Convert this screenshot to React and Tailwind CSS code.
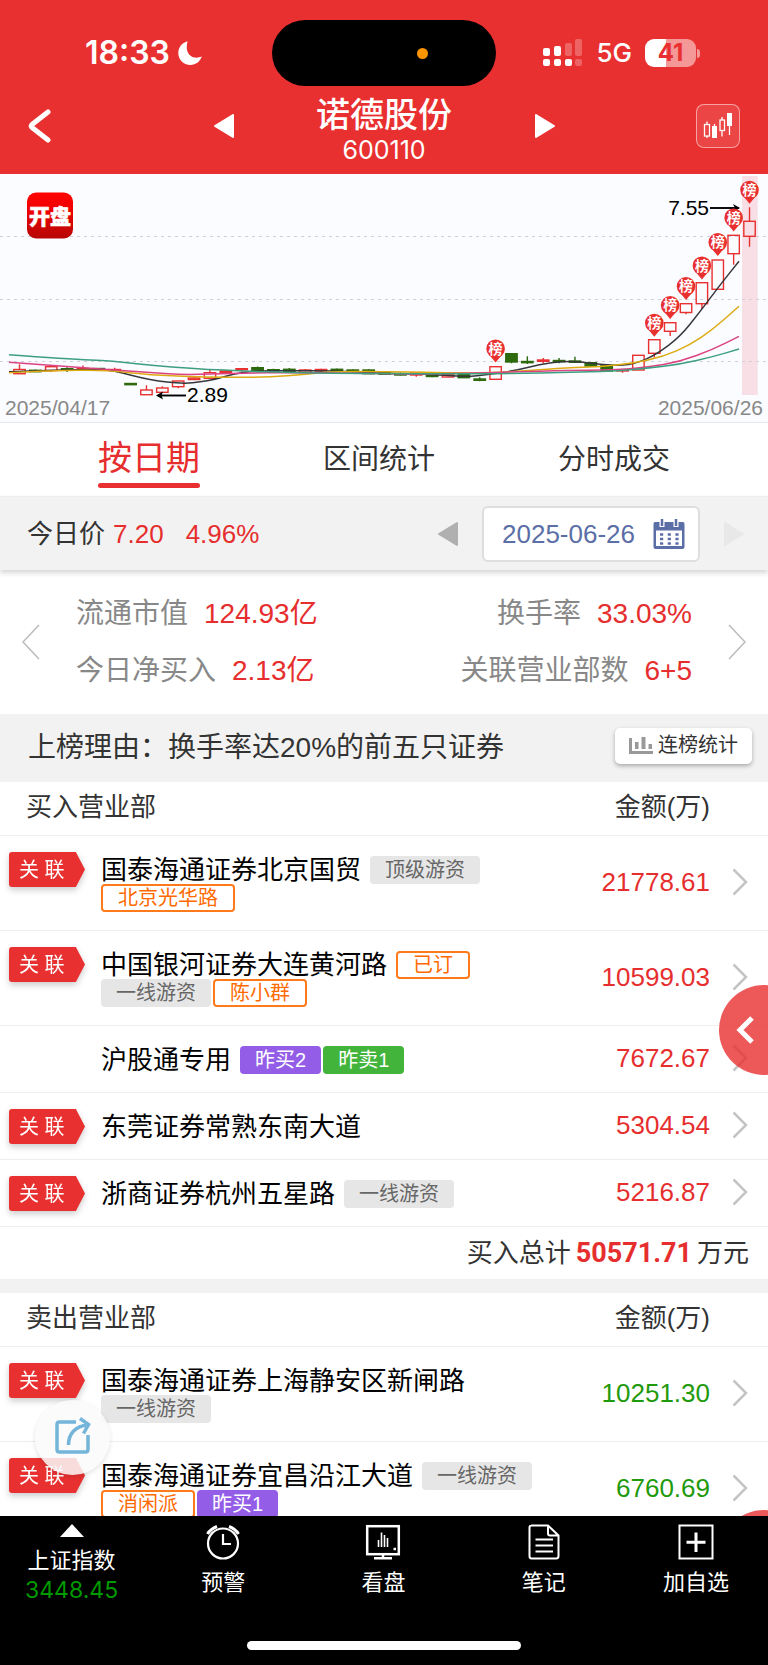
const RED = '#e93030'
const GREEN = '#2d6a0e'

// [open/close top, open/close bottom, wick top, wick bottom, rising]
const CANDLES = [
  [195.5, 199.7, 190.3, 199.7, 1],
  [196.3, 197.7, 195.5, 198, 0],
  [192.7, 196.5, 192.7, 198, 1],
  [194.7, 196, 193.3, 198, 0],
  [194.5, 195.7, 191.5, 196, 1],
  [194.5, 195.7, 194, 196.5, 0],
  [195.5, 196.5, 193.7, 197.5, 1],
  [209.5, 210.7, 209.5, 210.7, 0],
  [216, 220.7, 211.3, 220.7, 1],
  [214, 218.3, 212.3, 218.3, 1],
  [207, 212.7, 207, 214.3, 1],
  [204, 205.5, 203.5, 206, 1],
  [198.7, 204.3, 195, 204.3, 1],
  [197, 198.3, 196, 199.5, 1],
  [194.7, 195.7, 194.7, 197.7, 1],
  [193.7, 196.3, 192.5, 197, 0],
  [195.7, 197, 194.7, 197.5, 0],
  [195.3, 198.3, 194, 199, 0],
  [196, 198.3, 195, 198.7, 1],
  [195.5, 197, 194.7, 198, 1],
  [195.3, 197, 194.5, 197.3, 0],
  [196, 197.3, 195.3, 198, 0],
  [196, 199.7, 195.3, 200, 0],
  [198.5, 200.3, 197.3, 201, 0],
  [199.7, 201, 198.5, 201.5, 0],
  [199, 201, 198.7, 202.7, 1],
  [199, 202.5, 198.7, 203.3, 0],
  [200.3, 203, 200, 203.3, 1],
  [200.3, 203.7, 200, 204, 0],
  [205, 206.3, 203.3, 207.3, 0],
  [192.7, 205.3, 192.7, 205.3, 1],
  [179.7, 188, 179.3, 189.3, 0],
  [187.5, 188.7, 182.3, 190, 0],
  [186, 187.3, 184, 189.3, 1],
  [186.5, 187.7, 184, 189.3, 0],
  [187, 188.3, 182.7, 188.5, 0],
  [188.7, 192, 188.3, 192.3, 0],
  [191.3, 197, 191, 197.3, 0],
  [196, 197, 195, 198.7, 1],
  [181.3, 196, 181.3, 196, 1],
  [165.7, 179.3, 165.7, 183.5, 1],
  [148.7, 157.3, 148.7, 162, 1],
  [129.7, 138.5, 129.7, 140.3, 1],
  [108.7, 129.7, 108.7, 135, 1],
  [86, 115.3, 86, 115.3, 1],
  [61.3, 79.7, 61.3, 90.7, 1],
  [47.3, 62.3, 33.3, 72.7, 1],
]

const candleX = (i) => 19.5 + i * 15.87

// candle index and height of each 龙虎榜 pin
const PINS = [
  [30, 174.7],
  [40, 149],
  [41, 131.3],
  [42, 112.3],
  [43, 91.7],
  [44, 68.3],
  [45, 43.7],
  [46, 16],
]

const AVERAGES = [
  {
    color: '#35373b',
    points: [[9, 197.7], [52, 196], [100, 195.3], [114, 196.7], [133, 201.7], [150, 206], [167, 208], [185, 209.7], [200, 208], [217, 205], [233, 200], [253, 197], [290, 196.7], [333, 196.7], [380, 199.3], [413, 199.7], [447, 201.3], [467, 202.7], [487, 200.7], [513, 197], [540, 190.3], [563, 187.3], [580, 187.7], [600, 190.3], [620, 191.7], [637, 189.3], [657, 180], [680, 162.7], [700, 137.7], [720, 111], [739, 87.3]],
  },
  {
    color: '#dcab12',
    points: [[9, 198.7], [52, 196.7], [107, 196], [140, 200], [183, 202.7], [227, 203.3], [267, 203.3], [307, 200], [333, 197.3], [400, 197.7], [447, 199], [493, 199], [527, 196.7], [567, 193.7], [600, 192.7], [633, 189.3], [663, 182.7], [690, 171], [713, 155.3], [739, 132.3]],
  },
  {
    color: '#dc4383',
    points: [[9, 188.3], [67, 192.3], [114, 196], [150, 198.7], [187, 201], [233, 199], [300, 198.7], [367, 199.3], [413, 200.3], [463, 199.3], [513, 198], [567, 196.3], [613, 196], [647, 193.3], [680, 187.7], [713, 175.3], [739, 162.3]],
  },
  {
    color: '#3d9f80',
    points: [[9, 180.7], [67, 185], [114, 187], [150, 191.3], [200, 195], [233, 196.7], [300, 199], [367, 199.7], [447, 200], [513, 199.7], [567, 198.3], [613, 197.3], [647, 194.3], [680, 190.3], [713, 182.7], [739, 175]],
  },
]

function smooth(points) {
  const last = points[points.length - 1]
  let d = `M${points[0]}`
  for (let i = 1; i < points.length - 1; i++) {
    const [x, y] = points[i]
    const [nx, ny] = points[i + 1]
    d += `Q${x} ${y} ${(x + nx) / 2} ${(y + ny) / 2}`
  }
  return `${d}L${last}`
}

const TABS = ['按日期', '区间统计', '分时成交']

const BUYERS = [
  { name: '国泰海通证券北京国贸', linked: true, amount: '21778.61', tags: [['gray', '顶级游资'], ['orange', '北京光华路']] },
  { name: '中国银河证券大连黄河路', linked: true, amount: '10599.03', tags: [['orange', '已订'], ['gray', '一线游资'], ['orange', '陈小群']] },
  { name: '沪股通专用', linked: false, amount: '7672.67', tags: [['purple', '昨买2'], ['green', '昨卖1']] },
  { name: '东莞证券常熟东南大道', linked: true, amount: '5304.54', tags: [] },
  { name: '浙商证券杭州五星路', linked: true, amount: '5216.87', tags: [['gray', '一线游资']] },
]

const SELLERS = [
  { name: '国泰海通证券上海静安区新闸路', linked: true, amount: '10251.30', tags: [['gray', '一线游资']] },
  { name: '国泰海通证券宜昌沿江大道', linked: true, amount: '6760.69', tags: [['gray', '一线游资'], ['orange', '消闲派'], ['purple', '昨买1']] },
]

const TAG_STYLES = {
  gray: 'border-[#e6e6e6] bg-[#e6e6e6] px-[13px] text-[#666]',
  orange: 'border-[#ff7a1a] bg-white px-[15px] text-[#ff6a00]',
  purple: 'border-[#935de8] bg-[#935de8] px-[13px] text-white',
  green: 'border-[#42b43c] bg-[#42b43c] px-[13px] text-white',
}

function StatusBar() {
  return (
    <div className="grid grid-cols-[1fr_224px_1fr] items-center pt-5 font-[Inter]">
      <div className="flex items-center gap-2 pl-[85px]">
        <span className="text-[32px] leading-8 font-semibold">18:33</span>
        <svg className="h-6 w-6" viewBox="0 0 24 24" fill="currentColor">
          <path d="M9.6 0.3C8 6.500 8.600 11.500 12.200 14.500C15.500 17.200 19.800 17.300 23.800 15.600C22 20.800 17.800 24 12.500 24C5.600 24 0.300 18.800 0.300 12C0.300 6.500 4 1.700 9.600 0.300Z" />
        </svg>
      </div>
      <div className="relative h-[66px] rounded-full bg-black">
        <span className="absolute top-7 left-[145px] h-[11px] w-[11px] rounded-full bg-[#ff9500]" />
      </div>
      <div className="flex items-center justify-end pr-[68px]">
        <svg className="mr-[13px] h-7 w-10" viewBox="0 0 40 28" fill="currentColor">
          <rect x="0" y="9" width="7" height="8" rx="2" />
          <rect x="11" y="7" width="7" height="10" rx="2" />
          <rect x="22" y="4" width="7" height="13" rx="2" opacity=".25" />
          <rect x="32" y="0" width="7" height="17" rx="2" opacity=".25" />
          <rect x="0" y="20" width="7" height="7" rx="2" />
          <rect x="11" y="20" width="7" height="7" rx="2" />
          <rect x="22" y="20" width="7" height="7" rx="2" />
          <rect x="32" y="20" width="7" height="7" rx="2" opacity=".25" />
        </svg>
        <span className="mr-[13px] text-[26px] leading-7 font-medium">5G</span>
        <span className="flex h-7 w-[51px] items-center justify-center rounded-[9px] bg-linear-to-r from-white from-41% to-white/50 to-41% text-[24px] font-bold text-[#e93030]">
          41
        </span>
        <span className="ml-px h-[9px] w-[3px] rounded-r-full bg-white/50" />
      </div>
    </div>
  )
}

function Triangle({ className, left }) {
  return (
    <svg className={className} viewBox="0 0 20 24" fill="currentColor" stroke="currentColor" strokeWidth="2" strokeLinejoin="round">
      <path d={left ? 'M19 1V23L1 12Z' : 'M1 1V23L19 12Z'} />
    </svg>
  )
}

function TitleBar() {
  return (
    <div className="flex h-[88px] items-center">
      <div className="mb-2 flex flex-1 pl-7">
        <button aria-label="返回">
          <svg className="h-[34px] w-[23px]" viewBox="0 0 23 34" fill="none" stroke="currentColor" strokeWidth="5" strokeLinecap="round" strokeLinejoin="round">
            <path d="M20 3L4 15.500Q2.500 17 4 18.500L20 31" />
          </svg>
        </button>
      </div>
      <div className="flex w-[341px] items-center justify-between">
        <button className="mb-2" aria-label="上一只">
          <Triangle left className="h-6 w-5" />
        </button>
        <div className="pt-1 text-center">
          <h1 className="text-[34px] leading-9 font-medium">诺德股份</h1>
          <p className="font-[Inter] text-[25px] leading-[34px]">600110</p>
        </div>
        <button className="mb-2" aria-label="下一只">
          <Triangle className="h-6 w-5" />
        </button>
      </div>
      <div className="mb-2 flex flex-1 justify-end pr-7">
        <button className="flex h-11 w-11 items-center justify-center rounded-lg border border-white/50 bg-white/10" aria-label="K线">
          <svg className="h-[26px] w-[30px]" viewBox="0 0 30 26" fill="none" stroke="currentColor">
            <path d="M4 8.500v3M4 23v2M19 4v3M19 18v5.500M11.500 11v3M26.500 11v11" strokeWidth="1.300" />
            <rect x="1.500" y="11.500" width="5" height="11.500" strokeWidth="1.300" />
            <rect x="17" y="7" width="4.500" height="10.500" strokeWidth="1.300" />
            <rect x="9" y="13" width="5" height="12" fill="currentColor" stroke="none" />
            <rect x="24" y="0" width="5" height="13" fill="currentColor" stroke="none" />
          </svg>
        </button>
      </div>
    </div>
  )
}

function Pin({ x, y }) {
  return (
    <g transform={`translate(${x} ${y})`}>
      <circle r="9.300" fill={RED} />
      <path d="M-6 6.500L0 13.700L6 6.500Z" fill={RED} />
      <text y="5" textAnchor="middle" fontSize="14" fontWeight="700" fill="#fff">
        榜
      </text>
    </g>
  )
}

function Chart() {
  return (
    <svg className="block w-full border-b border-[#e6e8ee] bg-[#fbfcff]" viewBox="0 0 768 248">
      <defs>
        <linearGradient id="logo" x1="0" y1="0" x2="0" y2="1">
          <stop offset="0" stopColor="#ff0400" />
          <stop offset=".4" stopColor="#ee0000" />
          <stop offset="1" stopColor="#b60606" />
        </linearGradient>
      </defs>
      <rect x="742" y="2" width="15.700" height="219" fill="#f7dfe5" />
      {[62.5, 125.5, 187.5].map((y) => (
        <path key={y} d={`M0 ${y}H768`} stroke="#cfd1d6" strokeDasharray="3 4" />
      ))}
      <rect x="27" y="18.500" width="46" height="46" rx="9" fill="url(#logo)" />
      <text x="50" y="50" textAnchor="middle" fontSize="21" fontWeight="900" fill="#fff" stroke="#fff" strokeWidth=".6">
        开盘
      </text>

      {CANDLES.map(([top, bottom, high, low, up], i) => {
        const x = candleX(i)
        const color = up ? RED : GREEN
        return (
          <g key={i} stroke={color} strokeWidth="1.400">
            <path d={`M${x} ${high}V${top}M${x} ${bottom}V${low}`} />
            <rect x={x - 5.700} y={top} width="11.400" height={bottom - top} fill={up ? 'none' : color} />
          </g>
        )
      })}
      {AVERAGES.map(({ color, points }) => (
        <path key={color} d={smooth(points)} fill="none" stroke={color} strokeWidth="1.500" />
      ))}

      <g stroke="#000" strokeWidth="1.900" fill="none">
        <path d="M710 34H739" />
        <path d="M186 221.500H158" />
      </g>
      <path d="M740 34L733 30L735 34L733 38ZM156 221.500L163 217.500L161.500 221.500L163 225.500Z" />
      {PINS.map(([i, y]) => (
        <Pin key={i} x={candleX(i)} y={y} />
      ))}
      <g fontSize="21">
        <text x="709" y="41" textAnchor="end">7.55</text>
        <text x="187" y="228">2.89</text>
        <text x="5" y="241" fill="#888">2025/04/17</text>
        <text x="763" y="241" textAnchor="end" fill="#888">2025/06/26</text>
      </g>
    </svg>
  )
}

function Tabs() {
  return (
    <div className="flex h-[73px] items-center justify-between px-[98px] pt-px text-[28px]">
      {TABS.map((tab, i) =>
        i === 0 ? (
          <button key={tab} className="text-[34px] leading-[50px] text-[#e62e2e]">
            {tab}
            <span className="block h-[5px] rounded-full bg-[#e93030]" />
          </button>
        ) : (
          <button key={tab} className="text-[#333]">
            {tab}
          </button>
        ),
      )}
    </div>
  )
}

function DateBar() {
  return (
    <div className="relative flex h-[74px] items-center justify-between border-t border-[#eee] bg-[#f2f2f2] pt-px pr-6 pl-[27px] text-[26px] shadow-[0_3px_5px_rgba(0,0,0,0.16)]">
      <div className="flex items-center text-[#e62e2e]">
        <span className="mr-2 text-[#333]">今日价</span>
        <span className="mr-[22px]">7.20</span>
        <span>4.96%</span>
      </div>
      <div className="flex items-center">
        <button className="mr-6 text-[#b0b0b0]" aria-label="前一天">
          <Triangle left className="h-[26px] w-5" />
        </button>
        <button className="mr-6 flex h-14 items-center gap-[18px] rounded-md border-2 border-[#dedede] bg-white pr-[13px] pl-[18px] text-[#5b6ea6]">
          2025-06-26
          <svg className="h-[30px] w-8" viewBox="0 0 32 30" fill="currentColor">
            <path fillRule="evenodd" d="M2 3H30Q31.500 3 31.500 5V28Q31.500 30 29.500 30H2.500Q0.500 30 0.500 28V5Q0.500 3 2 3ZM3 11.500V27H29V11.500Z" />
            <path d="M9 0V8M23 0V8" stroke="#fff" strokeWidth="5" />
            <path d="M9 0V7M23 0V7" stroke="currentColor" strokeWidth="2.500" />
            <path d="M7 15.500H26M7 20H26M7 24.500H26" stroke="currentColor" strokeWidth="2.600" strokeDasharray="3.200 4.500" />
          </svg>
        </button>
        <button className="text-[#e8e8e8]" aria-label="后一天">
          <Triangle className="h-[26px] w-5" />
        </button>
      </div>
    </div>
  )
}

function Stat({ label, value }) {
  return (
    <div className="flex gap-4 leading-[57px]">
      <span className="text-[#888]">{label}</span>
      <span className="text-[#e62e2e]">{value}</span>
    </div>
  )
}

function Stats() {
  return (
    <div className="flex h-36 items-center justify-between px-[22px] text-[28px]">
      <button className="text-[#bbb]" aria-label="上一页">
        <svg className="h-9 w-[18px]" viewBox="0 0 18 36" fill="none" stroke="currentColor" strokeWidth="1.500">
          <path d="M17 1L1 18L17 35" />
        </svg>
      </button>
      <div className="flex flex-1 justify-between px-9">
        <div>
          <Stat label="流通市值" value="124.93亿" />
          <Stat label="今日净买入" value="2.13亿" />
        </div>
        <div className="flex flex-col items-end">
          <Stat label="换手率" value="33.03%" />
          <Stat label="关联营业部数" value="6+5" />
        </div>
      </div>
      <button className="text-[#bbb]" aria-label="下一页">
        <svg className="h-9 w-[18px]" viewBox="0 0 18 36" fill="none" stroke="currentColor" strokeWidth="1.500">
          <path d="M1 1L17 18L1 35" />
        </svg>
      </button>
    </div>
  )
}

function Reason() {
  return (
    <div className="flex h-[68px] items-center justify-between bg-[#f2f2f2] pr-4 pl-7 text-[#333]">
      <p className="text-[28px]">上榜理由：换手率达20%的前五只证券</p>
      <button className="mb-1 flex h-9 items-center gap-[5px] rounded-[5px] bg-white px-[14px] pb-0.5 text-[20px] shadow-[0_2px_4px_rgba(0,0,0,0.3)]">
        <svg className="h-[17px] w-6" viewBox="0 0 24 17" fill="#999">
          <path d="M0 1H3V14H24V17H0ZM6 5H9.500V12H6ZM12.500 0H16.500V12H12.500ZM19.500 7H23V12H19.500Z" />
        </svg>
        连榜统计
      </button>
    </div>
  )
}

function Linked() {
  return (
    <span className="block drop-shadow-[0_3px_3px_rgba(0,0,0,0.2)]">
      <span className="block h-[35px] w-[76px] rounded-l-[3px] bg-[#e93030] pl-[10px] text-[20px] leading-9 whitespace-pre text-white [clip-path:polygon(0_0,88%_0,100%_50%,88%_100%,0_100%)]">
        关 联
      </span>
    </span>
  )
}

function SeatTable({ title, rows, amountClass }) {
  return (
    <table className="w-full table-fixed border-separate border-spacing-0 text-[26px]">
      <colgroup>
        <col className="w-[101px]" />
        <col />
        <col className="w-[140px]" />
        <col className="w-[58px]" />
      </colgroup>
      <thead className="text-[#333]">
        <tr className="h-[54px]">
          <th colSpan={2} className="border-b border-[#eee] pb-1 pl-[26px] text-left leading-7 font-normal">
            {title}
          </th>
          <th className="border-b border-[#eee] pb-1 text-right leading-7 font-normal">金额(万)</th>
          <th className="border-b border-[#eee]" />
        </tr>
      </thead>
      <tbody>
        {rows.map((row) => (
          <tr key={row.name}>
            <td className="border-b border-[#eee] pt-4 pl-[9px] align-top">{row.linked && <Linked />}</td>
            <td className="border-b border-[#eee] pt-5 pb-[18px]">
              <div className="flex flex-wrap">
                <span className="mr-[9px] leading-7 text-black">{row.name}</span>
                {row.tags.map(([kind, text]) => (
                  <span key={text} className={`mr-0.5 h-7 rounded border-2 text-[20px] leading-6 ${TAG_STYLES[kind]}`}>
                    {text}
                  </span>
                ))}
              </div>
            </td>
            <td className={`border-b border-[#eee] pb-0.5 text-right leading-7 ${amountClass}`}>{row.amount}</td>
            <td className="border-b border-[#eee] pb-0.5 pl-[22px]">
              <svg className="h-7 w-4" viewBox="0 0 16 28" fill="none" stroke="#c4c4c4" strokeWidth="2.500">
                <path d="M1.500 1.500L14 14L1.500 26.500" />
              </svg>
            </td>
          </tr>
        ))}
      </tbody>
    </table>
  )
}

function SideHandle({ className }) {
  return (
    <button className={`absolute h-[90px] w-[90px] rounded-full bg-[#e93030]/80 pl-[17px] text-white ${className}`} aria-label="展开">
      <svg className="h-7 w-[18px]" viewBox="0 0 18 28" fill="none" stroke="currentColor" strokeWidth="5">
        <path d="M16 2L4 14L16 26" />
      </svg>
    </button>
  )
}

function AlarmIcon() {
  return (
    <svg className="h-9 w-9" viewBox="0 0 36 36" fill="none" stroke="currentColor" strokeWidth="2.200">
      <circle cx="18" cy="19.500" r="15" />
      <path d="M18 10V20H26" />
      <path d="M2.500 10Q5.500 5 12 2.500M33.500 10Q30.500 5 24 2.500" strokeWidth="3" />
    </svg>
  )
}

function BoardIcon() {
  return (
    <svg className="h-9 w-9" viewBox="0 0 36 36" fill="none" stroke="currentColor" strokeWidth="2.500">
      <rect x="2.200" y="2.200" width="31.600" height="28" />
      <path d="M18 30V34M9 34.200H27" />
      <path d="M13.500 16V23M16.500 8.500V23M19.500 11V23M22.500 14V23" strokeWidth="1.600" />
      <path d="M28.500 25H31" />
    </svg>
  )
}

function NoteIcon() {
  return (
    <svg className="h-9 w-9" viewBox="0 0 36 36" fill="none" stroke="currentColor" strokeWidth="2">
      <path d="M5 1.500H22L32.500 11.500V32Q32.500 34.500 30 34.500H5.500Q3.500 34.500 3.500 32V3.500Q3.500 1.500 5.500 1.500ZM22 1.500V9.500Q22 11.500 24 11.500H32.500" />
      <path d="M9.500 15.500H27M9.500 21.500H27M9.500 27.500H27" />
    </svg>
  )
}

function AddIcon() {
  return (
    <svg className="h-9 w-9" viewBox="0 0 36 36" fill="none" stroke="currentColor" strokeWidth="2">
      <rect x="1.500" y="1.500" width="33" height="33" />
      <path d="M18 8.500V28M8.500 18.200H27.500" strokeWidth="3" />
    </svg>
  )
}

const ACTIONS = [
  { label: '预警', Icon: AlarmIcon, width: 'flex-[160]' },
  { label: '看盘', Icon: BoardIcon, width: 'flex-[160]' },
  { label: '笔记', Icon: NoteIcon, width: 'flex-[160]' },
  { label: '加自选', Icon: AddIcon, width: 'flex-[144]' },
]

function BottomNav() {
  return (
    <nav className="relative bg-black pt-2 text-[22px] text-white">
      <div className="flex h-[117px] items-start">
        <button className="flex flex-[143] flex-col items-center">
          <svg className="mb-[9px] h-[13px] w-6" viewBox="0 0 24 13" fill="currentColor">
            <path d="M12 0L24 13H0Z" />
          </svg>
          <span className="leading-[30px]">上证指数</span>
          <span className="font-[Inter] text-[23px] leading-7 text-[#009a00]">3448.45</span>
        </button>
        {ACTIONS.map(({ label, Icon, width }) => (
          <button key={label} className={`flex flex-col items-center ${width}`}>
            <Icon />
            <span className="mt-2 leading-[30px]">{label}</span>
          </button>
        ))}
      </div>
      <div className="pb-[15px]">
        <div className="mx-auto h-[9px] w-[274px] rounded-full bg-white" />
      </div>
    </nav>
  )
}

export default function App() {
  return (
    <div className="flex h-screen flex-col bg-white font-['Liberation_Sans','Noto_Sans_CJK_SC',sans-serif]">
      <header className="bg-[#e93030] text-white">
        <StatusBar />
        <TitleBar />
      </header>

      <div className="relative min-h-0 flex-1 overflow-hidden">
        <main className="h-full overflow-y-auto [scrollbar-width:none]">
          <Chart />
          <Tabs />
          <DateBar />
          <Stats />
          <Reason />
          <SeatTable title="买入营业部" rows={BUYERS} amountClass="text-[#e62e2e]" />
          <p className="flex h-[52px] items-center justify-end gap-[5px] pr-[19px] text-[26px] text-[#333]">
            买入总计
            <strong className="font-[Roboto] text-[27px] font-bold text-[#e62e2e]">50571.71</strong>
            万元
          </p>
          <div className="h-[14px] bg-[#f2f2f2]" />
          <SeatTable title="卖出营业部" rows={SELLERS} amountClass="text-[#1f9a0c]" />
        </main>

        <SideHandle className="-right-[41px] bottom-[441px]" />
        <SideHandle className="-right-[41px] -bottom-[84px]" />
        <button className="absolute bottom-[41px] left-[35px] flex h-[75px] w-[75px] items-center justify-center rounded-full bg-[#fafafa]/85 text-[#74b5d9] shadow-[0_2px_5px_rgba(0,0,0,0.12)]" aria-label="分享">
          <svg className="mb-1 h-[38px] w-9" viewBox="0 0 36 38" fill="none" stroke="currentColor" strokeWidth="3.500">
            <path d="M21 5H4.500Q2 5 2 7.500V32.500Q2 35 4.500 35H30.500Q33 35 33 32.500V18" />
            <path d="M13.500 28C13.500 17 20 9 33 8M25 1.500L33.500 7.500L28.500 16.500" />
          </svg>
        </button>
      </div>

      <BottomNav />
    </div>
  )
}
